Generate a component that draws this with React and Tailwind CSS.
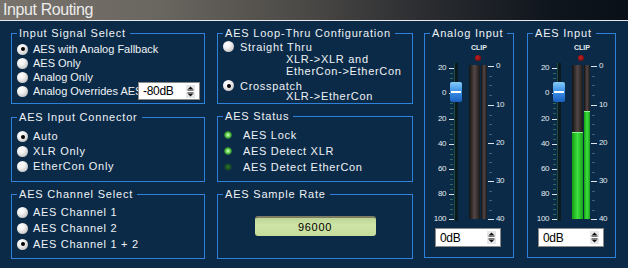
import { Fragment } from "react";

const faderMarks = [
  ["20", 34],
  ["0", 59],
  ["20", 85],
  ["40", 110],
  ["60", 135],
  ["80", 160],
  ["100", 185],
];

const meterMarks = [
  ["0", 32],
  ["10", 71],
  ["20", 109],
  ["30", 147],
  ["40", 185],
];

function Group({ title, className = "", children }) {
  return (
    <div className={`relative border border-[#2e80d8] ${className}`}>
      <span className="absolute -top-[7px] left-[5px] whitespace-nowrap bg-[#0b2a47] pl-[2px] pr-[4px] text-[11px] leading-[13px] tracking-[0.8px] text-[#eef2f6]">
        {title}
      </span>
      {children}
    </div>
  );
}

function RadioDot({ checked }) {
  return (
    <span className="flex h-[11px] w-[11px] shrink-0 items-center justify-center rounded-full bg-[radial-gradient(circle_at_35%_30%,#ffffff_0%,#f2f2f2_35%,#c9c9c9_75%,#9c9c9c_100%)]">
      {checked && <span className="h-[4px] w-[4px] rounded-full bg-black" />}
    </span>
  );
}

function Radio({ checked, label, className = "", gap = "ml-[5px]" }) {
  return (
    <div className={`flex items-center ${className}`}>
      <RadioDot checked={checked} />
      <span className={`${gap} whitespace-nowrap`}>{label}</span>
    </div>
  );
}

function Spinner() {
  return (
    <svg width="9" height="13" viewBox="0 0 9 13" className="shrink-0">
      <rect x="0" y="0" width="9" height="6" fill="#e6e6e6" />
      <rect x="0" y="7" width="9" height="6" fill="#e6e6e6" />
      <path d="M4.5 1.5 L7 4 H2 Z" fill="#111" />
      <rect x="1.5" y="4.5" width="6" height="1" fill="#111" />
      <rect x="1.5" y="7.5" width="6" height="1" fill="#111" />
      <path d="M2 9 H7 L4.5 11.5 Z" fill="#111" />
    </svg>
  );
}

function SpinBox({ value, className = "" }) {
  return (
    <div className={`flex items-center justify-between border border-[#8a8a8a] bg-white ${className}`}>
      <span className="pl-[4px] text-[12px] leading-[14px] tracking-[-0.3px] text-black">{value}</span>
      <span className="mr-[4px]">
        <Spinner />
      </span>
    </div>
  );
}

function Led({ on }) {
  return on ? (
    <span className="h-[8px] w-[8px] rounded-full bg-[radial-gradient(circle,#e0ffc8_0%,#6ad85a_35%,#2f8a2f_60%,transparent_80%)]" />
  ) : (
    <span className="h-[8px] w-[8px] rounded-full bg-[radial-gradient(circle,#2f7a2f_0%,#1a4d24_45%,transparent_80%)]" />
  );
}

function MeterBar({ width, fill }) {
  return (
    <div className={`relative h-full overflow-hidden bg-[linear-gradient(to_right,#121212,#544646_50%,#1a1a1a)] ${width}`}>
      {fill > 0 && (
        <div
          className="absolute bottom-0 left-0 right-0 border-t border-[#8ef08e] bg-[linear-gradient(to_right,#12a012,#3fe03f_50%,#17a017)]"
          style={{ height: fill }}
        />
      )}
    </div>
  );
}

function Gauge({ left = 0, right = 0 }) {
  return (
    <div className="relative h-[192px] text-[#e2eaf0]">
      {/* clip indicator */}
      <span className="absolute left-[44px] top-[9px] w-[20px] text-center text-[7px] font-bold leading-[9px]">CLIP</span>
      <span className="absolute left-[50px] top-[21px] h-[6px] w-[6px] rounded-full bg-[radial-gradient(circle_at_40%_40%,#c42222,#7a0c0c_75%)]" />

      {/* fader scale */}
      {faderMarks.map(([label, y], i) => (
        <Fragment key={y}>
          <span className="absolute left-[1px] w-[20px] text-right text-[8px] leading-[10px] tracking-[-0.4px]" style={{ top: y - 5 }}>
            {label}
          </span>
          <span className="absolute left-[24px] h-[1px] w-[5px] bg-[#dde6ee]" style={{ top: y }} />
          {i < faderMarks.length - 1 &&
            [1, 2, 3, 4].map((k) => (
              <span key={k} className="absolute left-[25px] h-[1px] w-[3px] bg-[#2e6a5c]" style={{ top: y + k * 5 }} />
            ))}
        </Fragment>
      ))}
      <span className="absolute left-[29px] top-[29px] h-[158px] w-[4px] border-l border-[#1f4a3e] bg-[#0a1a20]" />
      <div className="absolute left-[25px] top-[48px] flex h-[20px] w-[12px] flex-col justify-center rounded-[2px] bg-[linear-gradient(to_bottom,#86ccf8,#3c92e8_45%,#1a5fc0)]">
        <div className="mx-[1px] h-[2px] bg-white" />
      </div>

      {/* meter */}
      <div className="absolute left-[44px] top-[31px] flex h-[154px] gap-[1px]">
        <MeterBar width="w-[11px]" fill={left} />
        <MeterBar width="w-[6px]" fill={right} />
      </div>
      {meterMarks.map(([label, y], i) => (
        <Fragment key={y}>
          <span className="absolute left-[63px] h-[1px] w-[6px] bg-[#dde6ee]" style={{ top: y }} />
          <span className="absolute left-[71px] text-[8px] leading-[10px] tracking-[-0.4px]" style={{ top: y - 5 }}>
            {label}
          </span>
          {i < meterMarks.length - 1 &&
            [1, 2, 3].map((k) => (
              <span key={k} className="absolute left-[64px] h-[1px] w-[3px] bg-[#3a6470]" style={{ top: y + Math.round(k * 9.6) }} />
            ))}
        </Fragment>
      ))}
    </div>
  );
}

export default function App() {
  return (
    <div className="h-[268px] w-[628px] overflow-hidden bg-[#0b2a47] font-['Liberation_Sans',Arial,sans-serif] text-[11px] text-[#eef2f6]">
      {/* Title bar */}
      <div className="h-[21px] border-b border-[#e8e8e8] bg-[linear-gradient(to_right,#78736c_0%,#6a6660_25%,#4c4a47_48%,#2a2c30_68%,#0f151d_88%,#0a1018_100%)] pl-[3px] text-[16px] leading-[20px] tracking-[-0.4px] text-[#ececec]">
        Input Routing
      </div>

      <div className="flex pl-[11px] pt-[12px]">
        {/* Column 1 */}
        <div className="flex w-[194px] flex-col">
          <Group title="Input Signal Select" className="h-[71px] pl-[5px] pt-[8px]">
            <Radio checked label="AES with Analog Fallback" className="h-[14px]" />
            <Radio label="AES Only" className="h-[14px]" />
            <Radio label="Analog Only" className="h-[14px]" />
            <div className="flex h-[14px] items-center">
              <RadioDot />
              <span className="ml-[5px] w-[105px] overflow-hidden whitespace-nowrap">Analog Overrides AES</span>
              <SpinBox value="-80dB" className="h-[18px] w-[62px]" />
            </div>
          </Group>

          <Group title="AES Input Connector" className="mt-[13px] h-[65px] pl-[5px] pt-[11px] tracking-[0.7px]">
            <Radio checked label="Auto" className="h-[15px]" />
            <Radio label="XLR Only" className="h-[15px]" />
            <Radio label="EtherCon Only" className="h-[15px]" />
          </Group>

          <Group title="AES Channel Select" className="mt-[12px] h-[65px] pl-[5px] pt-[9px] tracking-[0.7px]">
            <Radio label="AES Channel 1" className="h-[16px]" />
            <Radio label="AES Channel 2" className="h-[16px]" />
            <Radio checked label="AES Channel 1 + 2" className="h-[16px]" />
          </Group>
        </div>

        {/* Column 2 */}
        <div className="ml-[12px] flex w-[196px] flex-col tracking-[0.7px]">
          <Group title="AES Loop-Thru Configuration" className="h-[71px] pl-[5px] pt-[6px] leading-[12px]">
            <Radio label="Straight Thru" gap="ml-[6px]" className="h-[13px]" />
            <div className="pl-[63px]">XLR-&gt;XLR and</div>
            <div className="pl-[63px]">EtherCon-&gt;EtherCon</div>
            <Radio checked label="Crosspatch" gap="ml-[6px]" className="mt-[2px] h-[13px]" />
            <div className="-mt-[2px] pl-[63px]">XLR-&gt;EtherCon</div>
          </Group>

          <Group title="AES Status" className="mt-[12px] h-[66px] pt-[10px]">
            {[
              ["AES Lock", true],
              ["AES Detect XLR", true],
              ["AES Detect EtherCon", false],
            ].map(([label, on]) => (
              <div key={label} className="flex h-[16px] items-center pl-[6px]">
                <Led on={on} />
                <span className="ml-[11px]">{label}</span>
              </div>
            ))}
          </Group>

          <Group title="AES Sample Rate" className="mt-[12px] h-[65px] pt-[21px]">
            <div className="mx-auto flex h-[20px] w-[121px] items-center justify-center rounded-[3px] border-t-2 border-[#7e7c62] bg-[linear-gradient(to_bottom,#bcd494,#cde4a6_40%,#c4dc9c)] text-[11px] text-black">
              96000
            </div>
          </Group>
        </div>

        {/* Column 3 */}
        <Group title="Analog Input" className="ml-[11px] h-[225px] w-[90px] tracking-normal">
          <Gauge />
          <SpinBox value="0dB" className="ml-[10px] mt-[2px] h-[19px] w-[66px]" />
        </Group>

        {/* Column 4 */}
        <Group title="AES Input" className="ml-[13px] h-[225px] w-[89px] tracking-normal">
          <Gauge left={87} right={108} />
          <SpinBox value="0dB" className="ml-[10px] mt-[2px] h-[19px] w-[66px]" />
        </Group>
      </div>
    </div>
  );
}
